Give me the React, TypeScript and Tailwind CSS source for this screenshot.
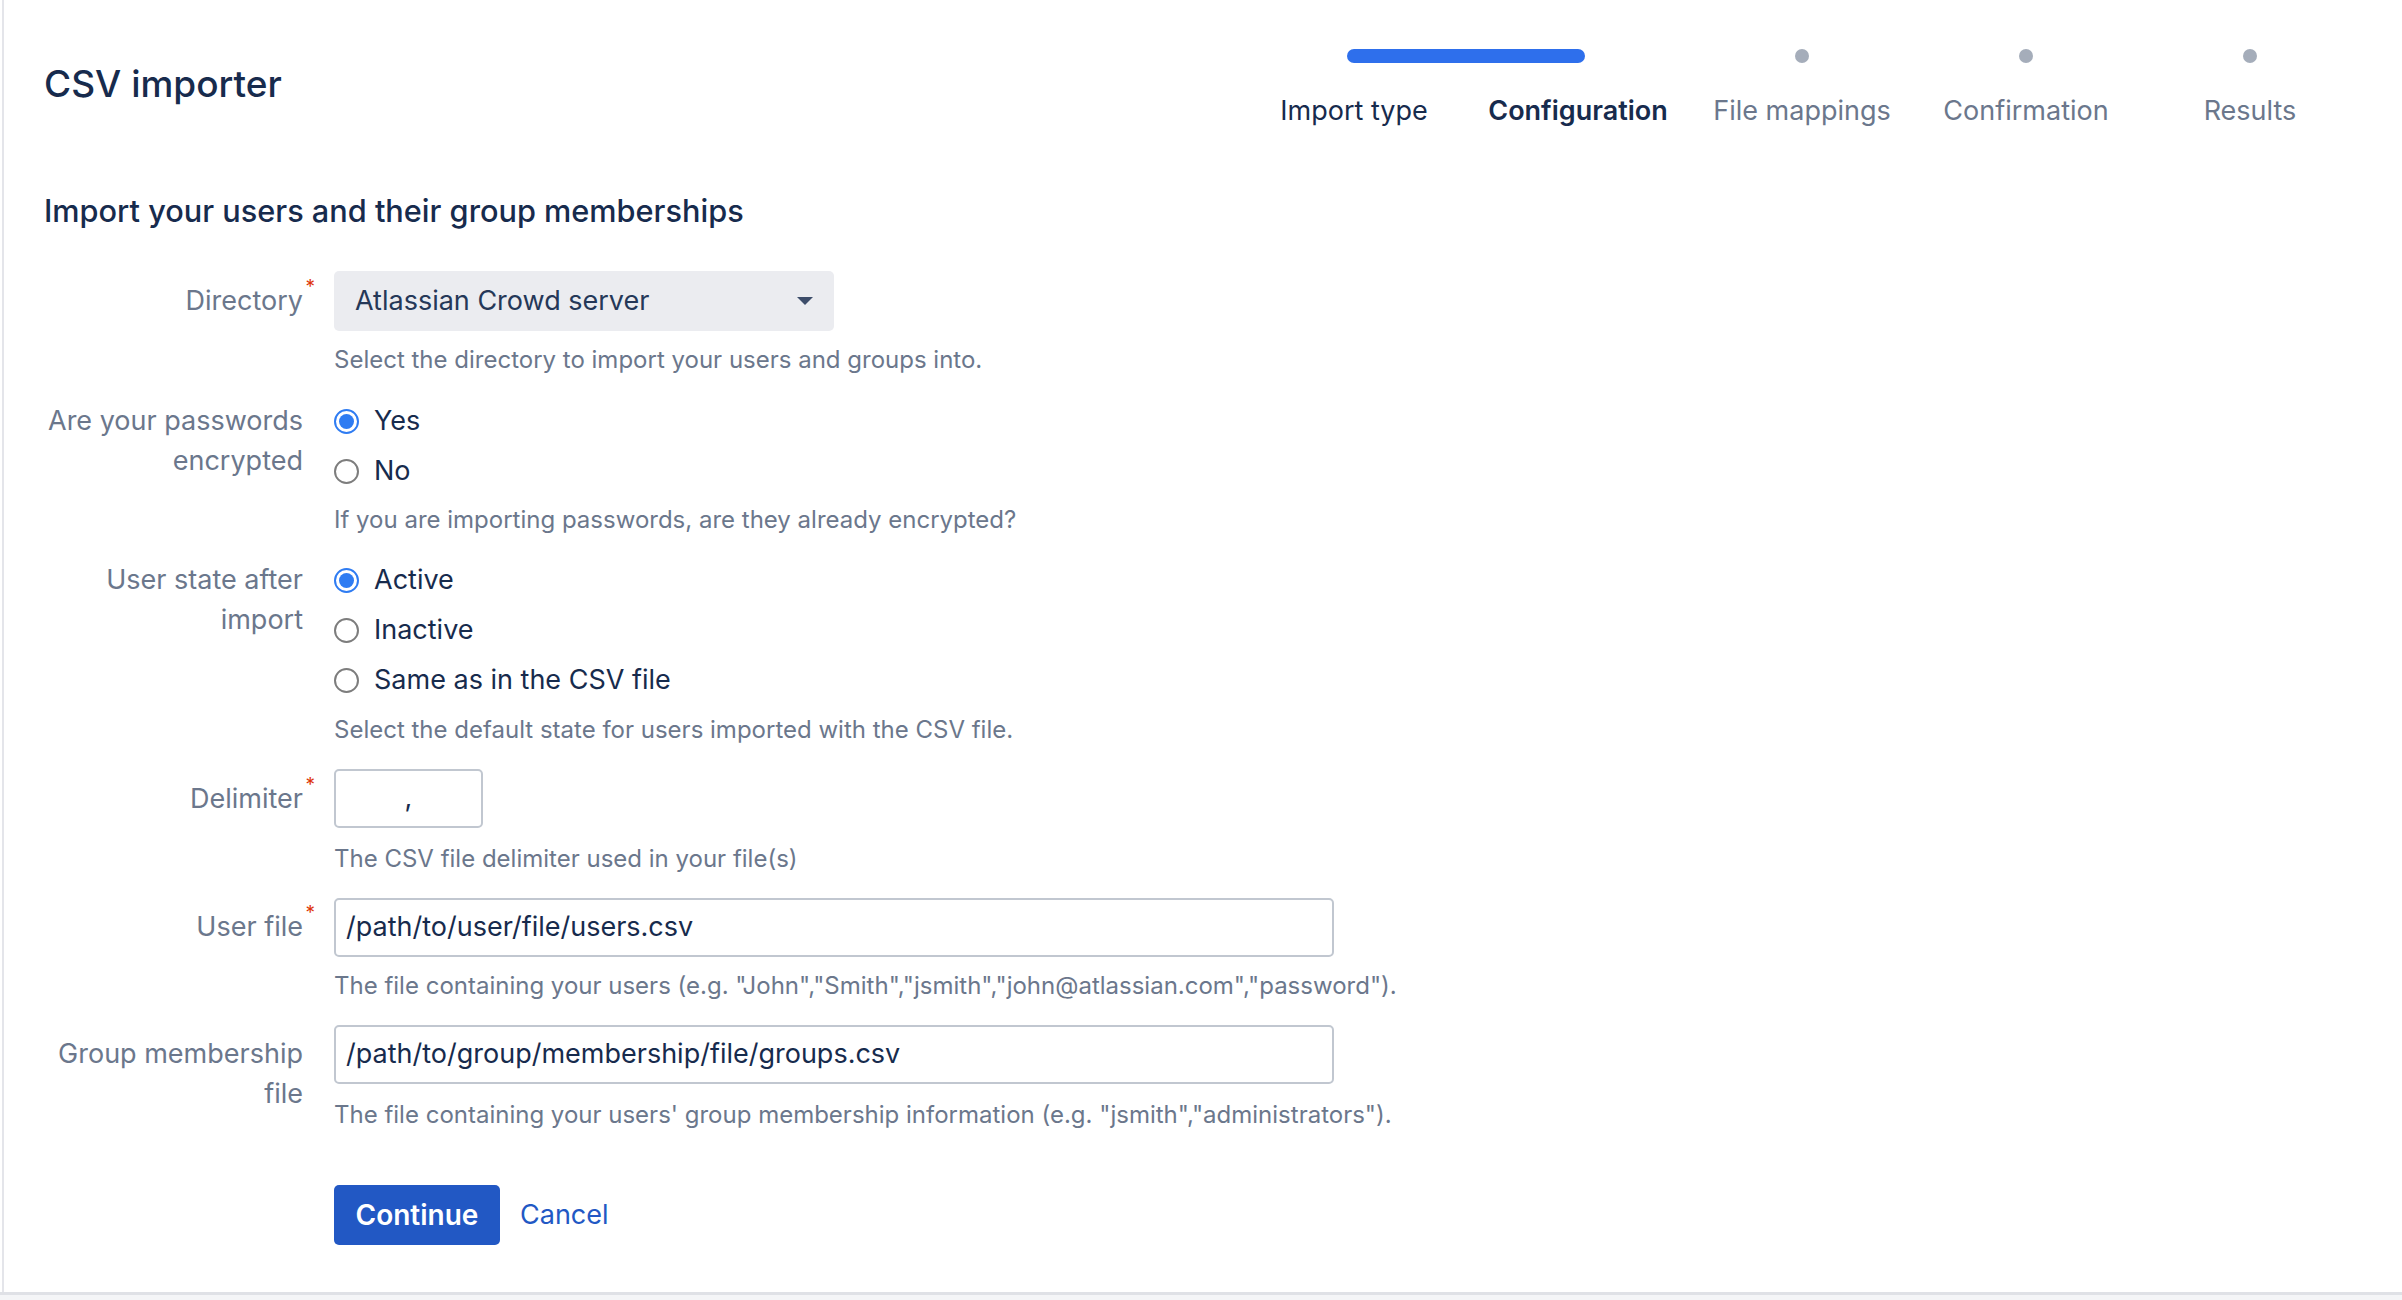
import React from "react";

const steps = [
  { label: "Import type", state: "done" },
  { label: "Configuration", state: "current" },
  { label: "File mappings", state: "todo" },
  { label: "Confirmation", state: "todo" },
  { label: "Results", state: "todo" },
];

function Required() {
  return (
    <span className="absolute right-[-12px] top-[-7px] text-[19px] leading-none text-[#de350b]">
      *
    </span>
  );
}

function FieldLabel({
  children,
  required,
  top,
}: {
  children: React.ReactNode;
  required?: boolean;
  top: string;
}) {
  return (
    <div className={`w-[259px] shrink-0 text-right text-[27px] leading-[40px] text-[#6b778c] ${top}`}>
      <span className="relative">
        {children}
        {required && <Required />}
      </span>
    </div>
  );
}

function Help({ children, mt }: { children: React.ReactNode; mt: string }) {
  return <p className={`text-[24px] leading-[30px] text-[#6b778c] ${mt}`}>{children}</p>;
}

function Radio({ label, checked }: { label: string; checked?: boolean }) {
  return (
    <label className="flex h-[50px] items-center gap-[15px]">
      {checked ? (
        <span className="flex h-[25px] w-[25px] items-center justify-center rounded-full border-2 border-[#2f7cf2] bg-white">
          <span className="h-[15px] w-[15px] rounded-full bg-[#2f7cf2]" />
        </span>
      ) : (
        <span className="h-[25px] w-[25px] rounded-full border-2 border-[#7d7d7d] bg-white" />
      )}
      <span className="text-[27px] text-[#172b4d]">{label}</span>
    </label>
  );
}

function TextBox({ value }: { value: string }) {
  return (
    <div className="flex h-[59px] w-[1000px] items-center rounded-[5px] border-2 border-[#c1c7d0] bg-white px-[10px] text-[27px] text-[#172b4d]">
      {value}
    </div>
  );
}

function Stepper() {
  return (
    <div className="w-[1120px]">
      <div className="grid h-[14px] grid-cols-5">
        <div className="col-span-2 px-[105px]">
          <div className="h-[14px] rounded-full bg-[#2e6fec]" />
        </div>
        {steps.slice(2).map((s) => (
          <div key={s.label} className="flex justify-center">
            <div className="h-[14px] w-[14px] rounded-full bg-[#a5adba]" />
          </div>
        ))}
      </div>
      <div className="mt-[30px] grid grid-cols-5 text-center text-[27px] leading-[36px]">
        {steps.map((s) => (
          <div
            key={s.label}
            className={
              s.state === "current"
                ? "font-semibold text-[#172b4d]"
                : s.state === "done"
                  ? "text-[#172b4d]"
                  : "text-[#6b778c]"
            }
          >
            {s.label}
          </div>
        ))}
      </div>
    </div>
  );
}

export default function App() {
  return (
    <div className="h-[1300px] w-full bg-[#f4f5f7] font-[Inter,sans-serif]">
      <div className="flex h-[1295px] border-b-[3px] border-[#dfe1e6] bg-white pl-[2px]">
        <div className="flex-1 border-l-2 border-[#e4e5ea] pl-[40px] pr-[40px]">
          <header className="flex items-start justify-between pt-[49px]">
            <h1 className="mt-[13px] text-[37px] font-medium leading-[44px] text-[#172b4d]">
              CSV importer
            </h1>
            <Stepper />
          </header>

          <h2 className="mt-[64px] text-[30.7px] font-medium leading-[36px] text-[#172b4d]">
            Import your users and their group memberships
          </h2>

          <form className="flex flex-col">
            <div className="mt-[42px] flex gap-[31px]">
              <FieldLabel required top="pt-[10px]">
                Directory
              </FieldLabel>
              <div>
                <div className="flex h-[60px] w-[500px] items-center justify-between rounded-[5px] bg-[#ebecf0] pl-[21px] pr-[21px] text-[27px] text-[#253858]">
                  <span>Atlassian Crowd server</span>
                  <svg width="16" height="8" viewBox="0 0 16 8">
                    <path d="M0 0h16L8 8z" fill="#3d4d6a" />
                  </svg>
                </div>
                <Help mt="mt-[14px]">Select the directory to import your users and groups into.</Help>
              </div>
            </div>

            <div className="mt-[21px] flex gap-[31px]">
              <FieldLabel top="pt-[5px]">
                Are your passwords
                <br />
                encrypted
              </FieldLabel>
              <div>
                <Radio label="Yes" checked />
                <Radio label="No" />
                <Help mt="mt-[9px]">If you are importing passwords, are they already encrypted?</Help>
              </div>
            </div>

            <div className="mt-[20px] flex gap-[31px]">
              <FieldLabel top="pt-[5px]">
                User state after
                <br />
                import
              </FieldLabel>
              <div>
                <Radio label="Active" checked />
                <Radio label="Inactive" />
                <Radio label="Same as in the CSV file" />
                <Help mt="mt-[10px]">Select the default state for users imported with the CSV file.</Help>
              </div>
            </div>

            <div className="mt-[24px] flex gap-[31px]">
              <FieldLabel required top="pt-[10px]">
                Delimiter
              </FieldLabel>
              <div>
                <div className="flex h-[59px] w-[149px] items-center justify-center rounded-[5px] border-2 border-[#c1c7d0] bg-white text-[27px] text-[#172b4d]">
                  ,
                </div>
                <Help mt="mt-[16px]">The CSV file delimiter used in your file(s)</Help>
              </div>
            </div>

            <div className="mt-[24px] flex gap-[31px]">
              <FieldLabel required top="pt-[9px]">
                User file
              </FieldLabel>
              <div>
                <TextBox value="/path/to/user/file/users.csv" />
                <Help mt="mt-[14px]">
                  The file containing your users (e.g. "John","Smith","jsmith","john@atlassian.com","password").
                </Help>
              </div>
            </div>

            <div className="mt-[24px] flex gap-[31px]">
              <FieldLabel top="pt-[9px]">
                Group membership
                <br />
                file
              </FieldLabel>
              <div>
                <TextBox value="/path/to/group/membership/file/groups.csv" />
                <Help mt="mt-[16px]">
                  The file containing your users' group membership information (e.g. "jsmith","administrators").
                </Help>
              </div>
            </div>

            <div className="mt-[55px] flex items-center gap-[20px] pl-[290px]">
              <button
                type="button"
                className="h-[60px] w-[166px] rounded-[5px] bg-[#2258c4] text-[28px] font-semibold text-white"
              >
                Continue
              </button>
              <a className="text-[27px] text-[#2258c4]">Cancel</a>
            </div>
          </form>
        </div>
      </div>
    </div>
  );
}
